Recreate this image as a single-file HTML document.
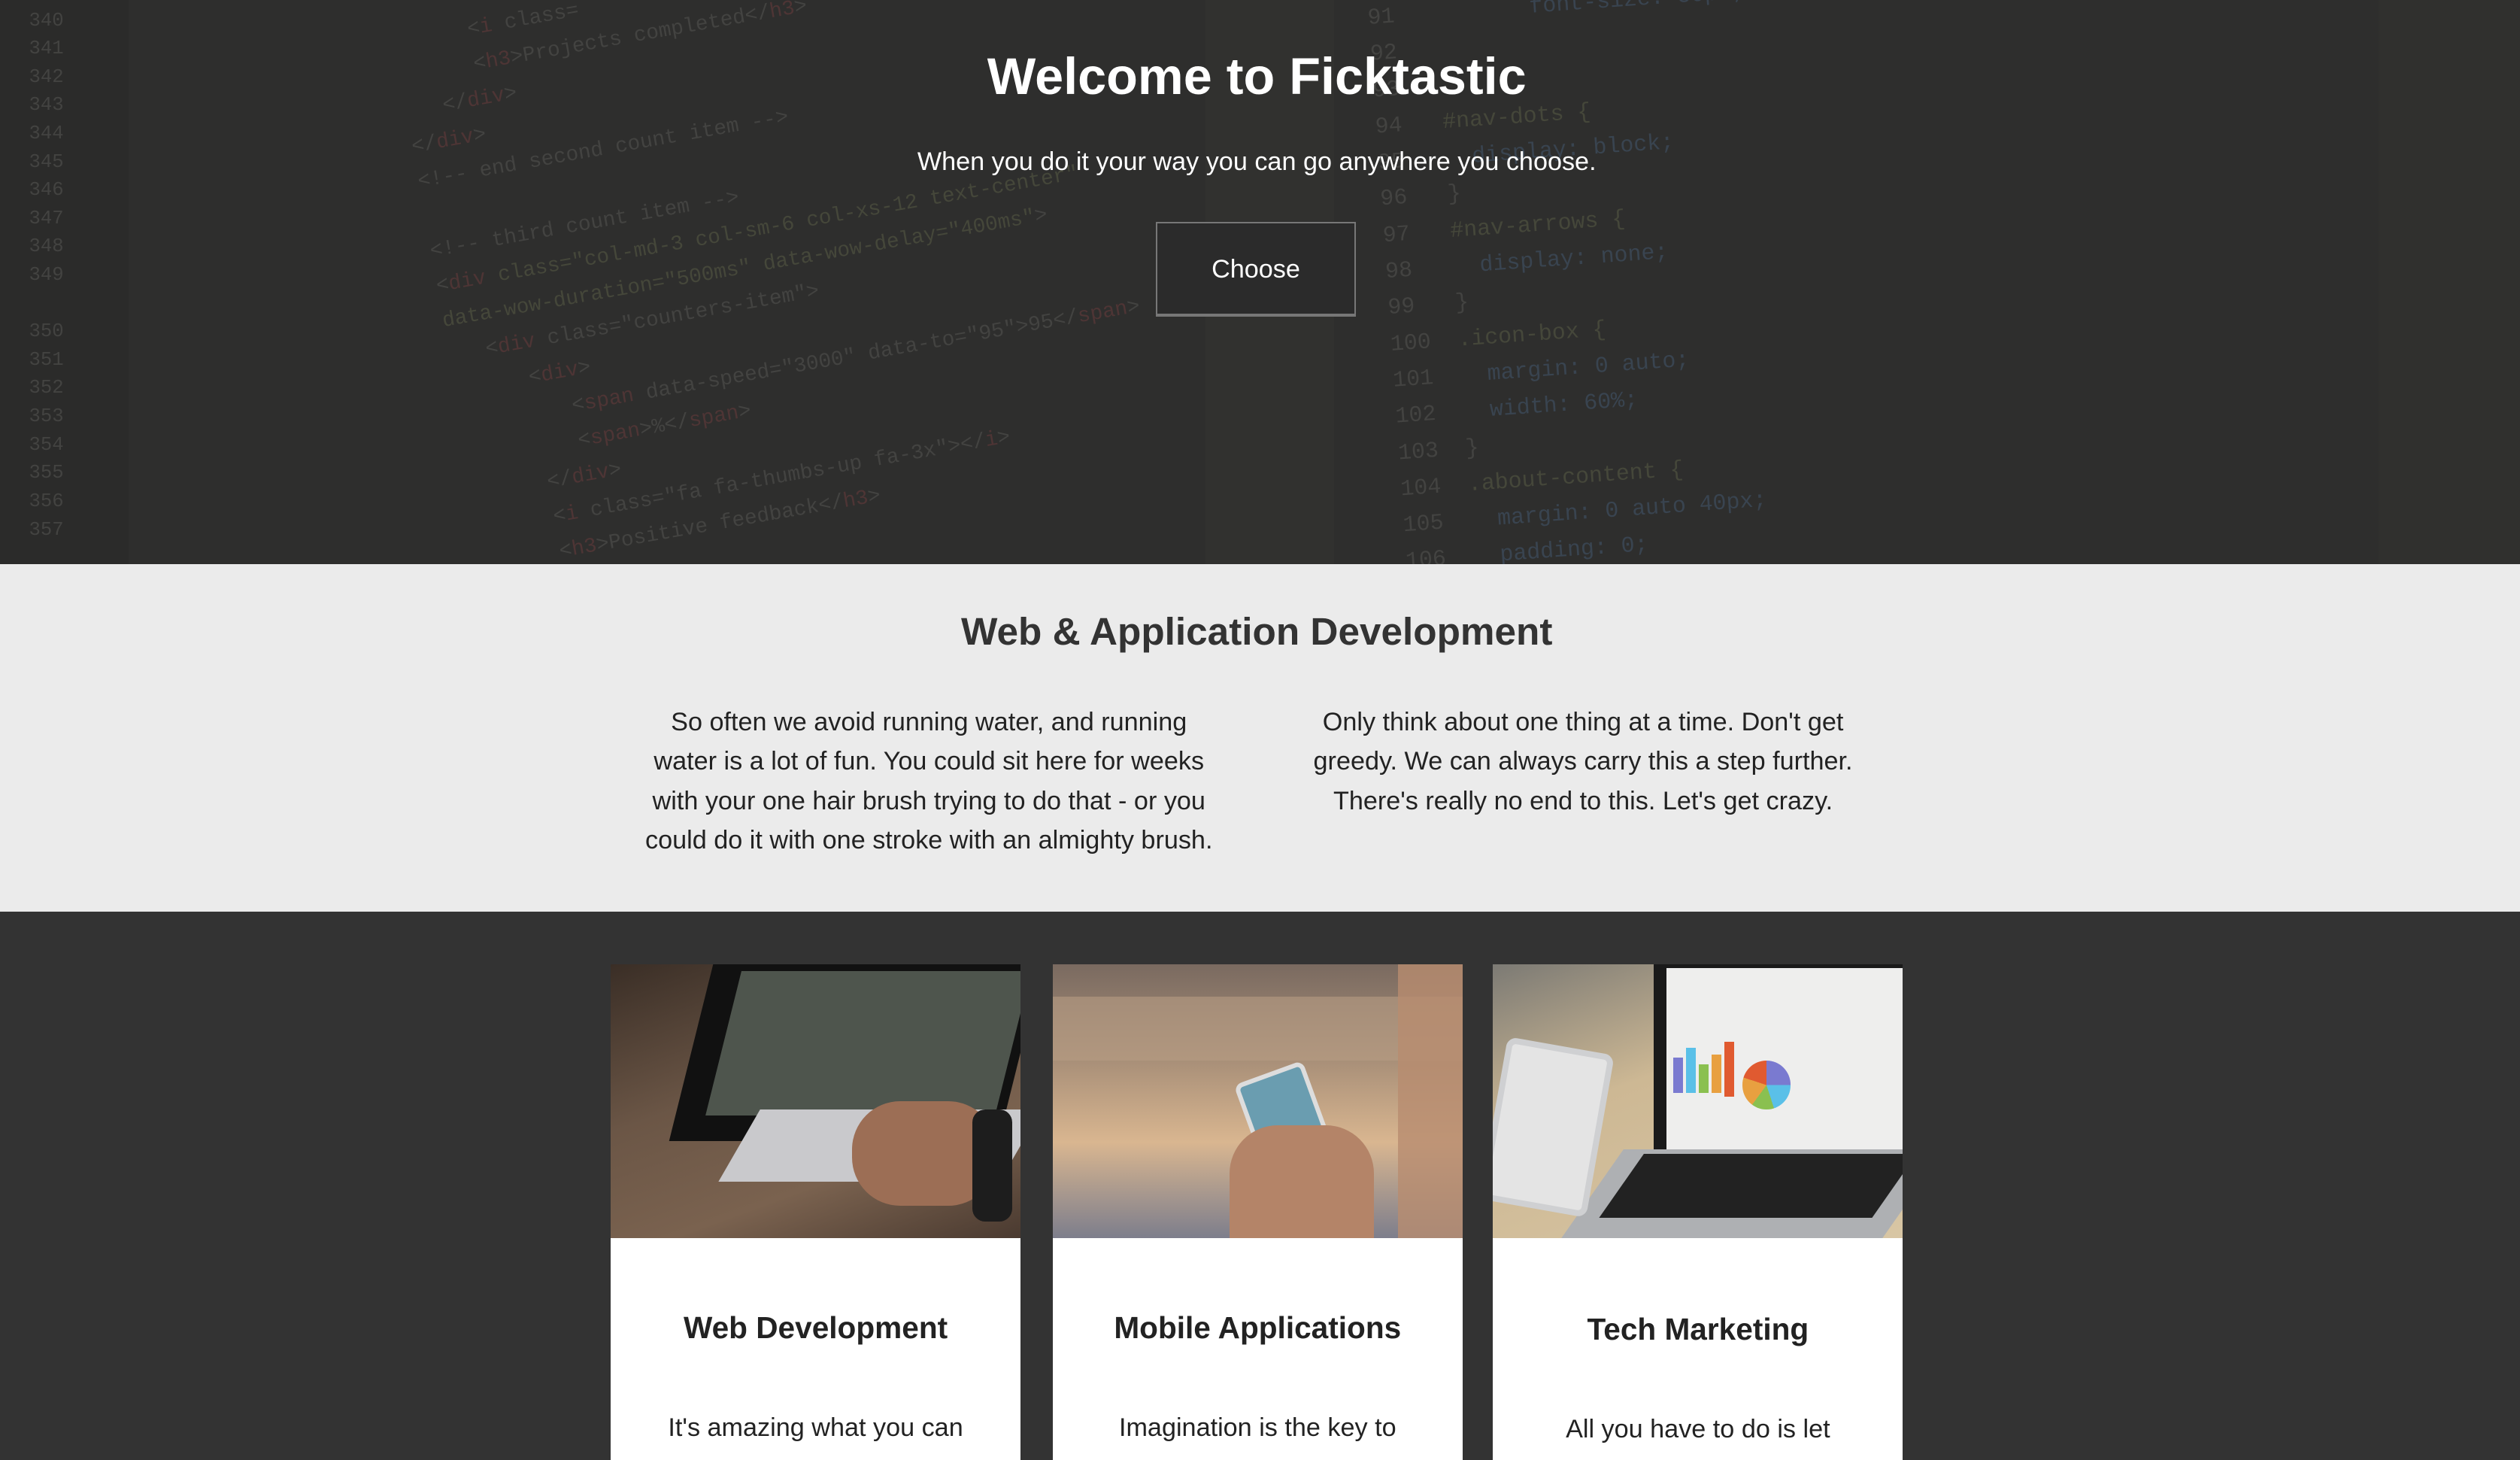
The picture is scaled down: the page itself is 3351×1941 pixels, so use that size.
<!DOCTYPE html>
<html><head><meta charset="utf-8"><style>
html,body{margin:0;padding:0;}
body{width:3351px;height:1939px;overflow:hidden;background:#333;}
#w{zoom:2.13712;width:1568px;height:908px;position:relative;font-family:"Liberation Sans",Arial,sans-serif;overflow:hidden;}
.a{position:absolute;}
#hero{left:0;top:0;width:1568px;height:351px;background:#2e2e2d;overflow:hidden;}
.code{font-family:"Liberation Mono",monospace;font-size:13px;line-height:22px;white-space:pre;color:#434341;}
.r{color:#4e3535}.g{color:#45473a}.b{color:#394450}
h1{margin:0;}
.t{color:#fff;text-align:center;width:1568px;left:0;}
#sec{left:0;top:351px;width:1568px;height:216px;background:#ebebeb;}
.p{font-size:16px;line-height:24.5px;color:#222;text-align:center;}
.card{top:600px;width:255px;height:310px;background:#fff;}
.img{left:0;top:0;width:255px;height:170px;overflow:hidden;}
.ct{top:215px;width:255px;text-align:center;font-size:19px;font-weight:bold;color:#222;}
.cp{top:279px;width:255px;text-align:center;font-size:16px;color:#222;}
</style></head><body><div id="w">
<div id="hero" class="a">
 <div class="a" style="left:0;top:0;width:80px;height:351px;background:#2b2b2a"></div>
 <div class="a" style="left:750px;top:0;width:80px;height:351px;background:#31312f"></div>
 <div class="a" style="left:1480px;top:0;width:88px;height:351px;background:#30302e"></div>
 <div class="a code" style="left:18px;top:4px;font-size:12px;line-height:17.6px">340
341
342
343
344
345
346
347
348
349

350
351
352
353
354
355
356
357</div>
 <div class="a code" style="left:220px;top:20px;transform:rotate(-10deg);transform-origin:0 0">         &lt;<span class="r">i</span> class=
         &lt;<span class="r">h3</span>&gt;Projects completed&lt;/<span class="r">h3</span>&gt;
      &lt;/<span class="r">div</span>&gt;
   &lt;/<span class="r">div</span>&gt;
   &lt;!-- end second count item --&gt;

   &lt;!-- third count item --&gt;
   &lt;<span class="r">div</span> <span class="g">class="col-md-3 col-sm-6 col-xs-12 text-center"</span>
   <span class="g">data-wow-duration="500ms" data-wow-delay="400ms"</span>&gt;
      &lt;<span class="r">div</span> class="counters-item"&gt;
         &lt;<span class="r">div</span>&gt;
            &lt;<span class="r">span</span> data-speed="3000" data-to="95"&gt;95&lt;/<span class="r">span</span>&gt;
            &lt;<span class="r">span</span>&gt;%&lt;/<span class="r">span</span>&gt;
         &lt;/<span class="r">div</span>&gt;
         &lt;<span class="r">i</span> class="fa fa-thumbs-up fa-3x"&gt;&lt;/<span class="r">i</span>&gt;
         &lt;<span class="r">h3</span>&gt;Positive feedback&lt;/<span class="r">h3</span>&gt;</div>
 <div class="a code" style="left:850px;top:0px;font-size:14px;line-height:22.6px;transform:rotate(-4deg);transform-origin:0 0">91          <span class="b">font-size: 50px;</span>
92
93
94   <span class="g">#nav-dots {</span>
95     <span class="b">display: block;</span>
96   }
97   <span class="g">#nav-arrows {</span>
98     <span class="b">display: none;</span>
99   }
100  <span class="g">.icon-box {</span>
101    <span class="b">margin: 0 auto;</span>
102    <span class="b">width: 60%;</span>
103  }
104  <span class="g">.about-content {</span>
105    <span class="b">margin: 0 auto 40px;</span>
106    <span class="b">padding: 0;</span></div>
 <h1 class="a t" style="top:29px;font-size:32px;line-height:38px;left:-2px">Welcome to Ficktastic</h1>
 <div class="a t" style="top:91px;font-size:16px;line-height:20px;left:-2px">When you do it your way you can go anywhere you choose.</div>
 <div class="a" style="left:719px;top:138px;width:123px;height:56px;border:1px solid #777;border-bottom:2px solid #777;background:#2b2b2b;color:#fff;font-size:16px;line-height:58px;text-align:center">Choose</div>
</div>
<div id="sec" class="a">
 <div class="a" style="left:-2px;width:1568px;top:27px;text-align:center;font-size:24px;font-weight:bold;color:#333;line-height:30px">Web &amp; Application Development</div>
 <div class="a p" style="left:393px;width:370px;top:86px">So often we avoid running water, and running<br>water is a lot of fun. You could sit here for weeks<br>with your one hair brush trying to do that - or you<br>could do it with one stroke with an almighty brush.</div>
 <div class="a p" style="left:800px;width:370px;top:86px">Only think about one thing at a time. Don't get<br>greedy. We can always carry this a step further.<br>There's really no end to this. Let's get crazy.</div>
</div>
<div class="a card" style="left:380px">
 <div class="a img" style="background:linear-gradient(160deg,#3a2e26 0%,#6b5646 40%,#7a624f 70%,#4a3a30 100%)">
  <div class="a" style="left:50px;top:0;width:205px;height:110px;background:#111;transform:skewX(-14deg)"></div>
  <div class="a" style="left:70px;top:4px;width:180px;height:90px;background:#4e554d;transform:skewX(-14deg)"></div>
  <div class="a" style="left:80px;top:90px;width:175px;height:45px;background:#c9c9cc;transform:skewX(-30deg)"></div>
  <div class="a" style="left:150px;top:85px;width:90px;height:65px;background:#9c6e55;border-radius:30px"></div>
  <div class="a" style="left:225px;top:90px;width:25px;height:70px;background:#1d1d1d;border-radius:8px"></div>
 </div>
 <div class="a ct">Web Development</div><div class="a cp">It's amazing what you can</div>
</div>
<div class="a card" style="left:655px">
 <div class="a img" style="background:linear-gradient(180deg,#7a6a60 0%,#a88f78 35%,#d9b690 65%,#7d7e8c 100%)">
  <div class="a" style="left:0;top:20px;width:255px;height:40px;background:#b89d83;opacity:.6"></div>
  <div class="a" style="left:215px;top:0;width:40px;height:170px;background:#b88c6f;opacity:.8"></div>
  <div class="a" style="left:125px;top:65px;width:40px;height:75px;background:#6a9db0;border:3px solid #ddd;border-radius:5px;transform:rotate(-20deg)"></div>
  <div class="a" style="left:110px;top:100px;width:90px;height:70px;background:#b48468;border-radius:30px 30px 0 0"></div>
 </div>
 <div class="a ct">Mobile Applications</div><div class="a cp">Imagination is the key to</div>
</div>
<div class="a card" style="left:929px">
 <div class="a img" style="background:linear-gradient(160deg,#7c7a74 0%,#cdb894 40%,#d8c6a4 100%)">
  <div class="a" style="left:100px;top:0;width:155px;height:130px;background:#1a1a1a"></div>
  <div class="a" style="left:108px;top:2px;width:147px;height:115px;background:#eeeeed"></div>
  <div class="a" style="left:112px;top:58px;width:6px;height:22px;background:#7a7ad0"></div>
  <div class="a" style="left:120px;top:52px;width:6px;height:28px;background:#5ac0e8"></div>
  <div class="a" style="left:128px;top:62px;width:6px;height:18px;background:#8ac050"></div>
  <div class="a" style="left:136px;top:56px;width:6px;height:24px;background:#e8a040"></div>
  <div class="a" style="left:144px;top:48px;width:6px;height:34px;background:#e05a30"></div>
  <div class="a" style="left:155px;top:60px;width:30px;height:30px;border-radius:50%;background:conic-gradient(#7a7ad0 0 25%,#5ac0e8 0 45%,#8ac050 0 60%,#e8a040 0 80%,#e05a30 0)"></div>
  <div class="a" style="left:60px;top:115px;width:200px;height:60px;background:#aeb0b3;transform:skewX(-35deg)"></div>
  <div class="a" style="left:80px;top:118px;width:170px;height:40px;background:#222;transform:skewX(-35deg)"></div>
  <div class="a" style="left:0;top:50px;width:60px;height:95px;background:#e4e4e4;border:4px solid #cfd0d2;border-radius:6px;transform:rotate(10deg)"></div>
 </div>
 <div class="a ct" style="top:216px">Tech Marketing</div><div class="a cp" style="top:280px">All you have to do is let</div>
</div>
</div></body></html>
